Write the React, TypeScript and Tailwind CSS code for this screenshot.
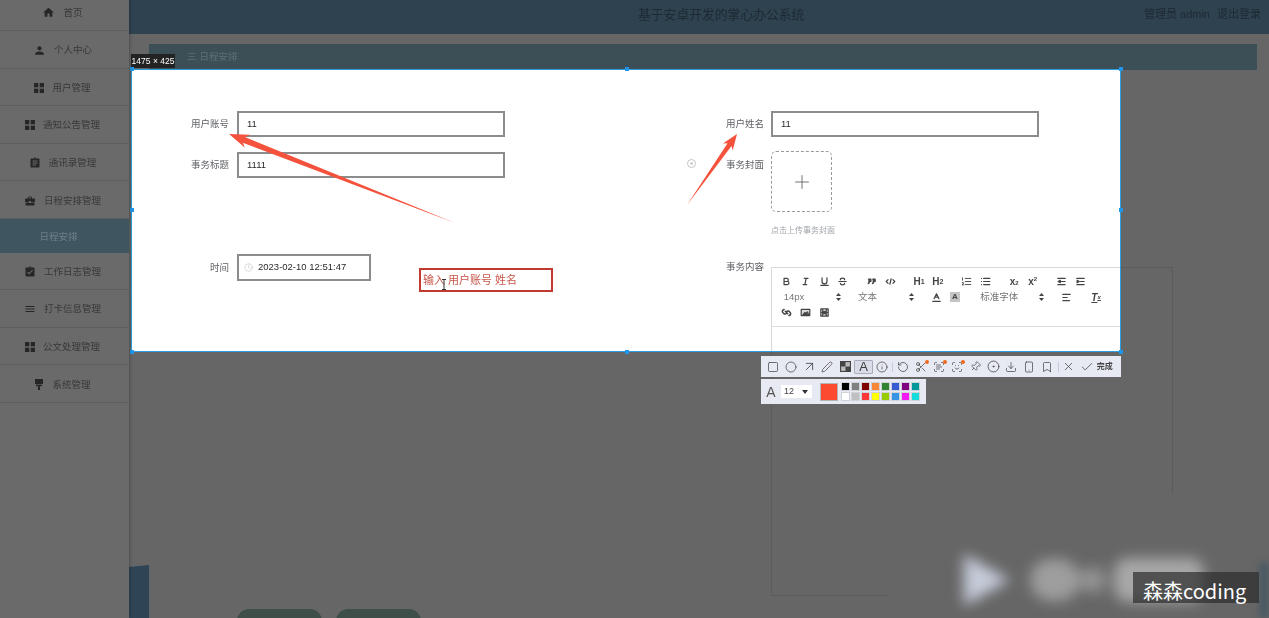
import type { ReactNode } from "react";
import {
  ArrowUpRight,
  Check,
  Circle,
  CircleDot,
  Clock,
  Download,
  Info,
  Bookmark,
  Pen,
  Pin,
  Plus,
  RotateCcw,
  ScanFace,
  Scissors,
  ScanText,
  Smartphone,
  Square,
  X,
} from "lucide-react";
import {
  MdAssignment,
  MdAssignmentTurnedIn,
  MdBusinessCenter,
  MdHome,
  MdMenu,
  MdPerson,
} from "react-icons/md";

function GridIcon() {
  return (
    <svg width="10" height="10" viewBox="0 0 10 10" fill="#262626">
      <rect x="0" y="0" width="4.3" height="4.3" />
      <rect x="5.7" y="0" width="4.3" height="4.3" />
      <rect x="0" y="5.7" width="4.3" height="4.3" />
      <rect x="5.7" y="5.7" width="4.3" height="4.3" />
    </svg>
  );
}

function BrushIcon() {
  return (
    <svg width="10" height="11" viewBox="0 0 10 11" fill="#262626">
      <rect x="1" y="0" width="8" height="5" />
      <rect x="2" y="5.6" width="6" height="1.6" />
      <rect x="4" y="7.2" width="2" height="3.8" />
    </svg>
  );
}

const menu: { label: string; icon: ReactNode }[] = [
  { label: "首页", icon: <MdHome size={13} color="#262626" /> },
  { label: "个人中心", icon: <MdPerson size={13} color="#262626" /> },
  { label: "用户管理", icon: <GridIcon /> },
  { label: "通知公告管理", icon: <GridIcon /> },
  { label: "通讯录管理", icon: <MdAssignment size={12} color="#262626" /> },
  { label: "日程安排管理", icon: <MdBusinessCenter size={12} color="#262626" /> },
];

const menuAfter: { label: string; icon: ReactNode }[] = [
  { label: "工作日志管理", icon: <MdAssignmentTurnedIn size={12} color="#262626" /> },
  { label: "打卡信息管理", icon: <MdMenu size={12} color="#262626" /> },
  { label: "公文处理管理", icon: <GridIcon /> },
  { label: "系统管理", icon: <BrushIcon /> },
];

function MenuItem({ label, icon }: { label: string; icon: ReactNode }) {
  return (
    <div className="flex h-[37.6px] items-center justify-center gap-[8px] border-b border-[#5e5e5e] pr-[4px] pt-[2px] text-[9.5px] text-[#383838]">
      {icon}
      <span>{label}</span>
    </div>
  );
}

function Field({
  label,
  className,
  labelClass,
  children,
}: {
  label: string;
  className?: string;
  labelClass?: string;
  children: ReactNode;
}) {
  return (
    <div className={`flex items-start ${className ?? ""}`}>
      <span className={`w-[60px] shrink-0 text-right text-[9.5px] leading-[12px] text-[#606266] ${labelClass ?? "pt-[7px]"}`}>
        {label}
      </span>
      {children}
    </div>
  );
}

function TextBox({ value, className }: { value: string; className: string }) {
  return (
    <div className={`flex items-center border-2 border-[#8c8c8c] pl-[8px] text-[9.5px] text-[#2a2a2a] ${className}`}>
      {value}
    </div>
  );
}

// quill style toolbar glyphs
function Glyph({ children }: { children: ReactNode }) {
  return (
    <span className="flex h-[16px] w-[18.6px] items-center justify-center">
      <svg width="11" height="11" viewBox="0 0 18 18" fill="none" stroke="#444" strokeWidth="2" strokeLinecap="round" strokeLinejoin="round">
        {children}
      </svg>
    </span>
  );
}

function Heading({ n }: { n: string }) {
  return (
    <span className="flex h-[16px] w-[18.6px] items-center justify-center text-[10px] font-bold text-[#444]">
      H<span className="mt-[3px] text-[7px]">{n}</span>
    </span>
  );
}

function Script({ n, up }: { n: string; up?: boolean }) {
  return (
    <span className="flex h-[16px] w-[18.6px] items-center justify-center text-[10px] font-bold text-[#444]">
      x<span className={`text-[6px] ${up ? "mb-[4px]" : "mt-[4px]"}`}>{n}</span>
    </span>
  );
}

function Picker({ label, className }: { label: string; className: string }) {
  return (
    <span className={`flex h-[16px] items-center justify-between text-[9.5px] text-[#777] ${className}`}>
      <span>{label}</span>
      <svg width="5" height="8" viewBox="0 0 5 8" fill="#444">
        <path d="M2.5 0 5 3H0zM2.5 8 0 5h5z" />
      </svg>
    </span>
  );
}

function EditorToolbar() {
  return (
    <div className="h-[59px] w-[402px] border-b border-[#dcdcdc] pl-[5.7px] pt-[5px]">
      <div className="flex">
        <div className="mr-[10.3px] flex">
          <Glyph>
            <path d="M5 4h4.5a2.5 2.5 0 0 1 0 5H5zM5 9h5.5a2.5 2.5 0 0 1 0 5H5z" />
          </Glyph>
          <Glyph>
            <path d="M7 4h6M5 14h6M8 14l2-10" />
          </Glyph>
          <Glyph>
            <path d="M5 3v6a4 4 0 0 0 8 0V3M3 15.5h12" />
          </Glyph>
          <Glyph>
            <path d="M3 9h12M12.5 6c0-1.5-1.5-2.5-3.5-2.5S5.500 4.500 5.500 6M5.500 12c0 1.500 1.500 2.500 3.500 2.500s3.500-1 3.500-2.500" />
          </Glyph>
        </div>
        <div className="mr-[10.3px] flex">
          <Glyph>
            <path d="M4 5h4v4H6c0 2-1 3-2.500 3.500M11 5h4v4h-2c0 2-1 3-2.500 3.500" fill="#444" />
          </Glyph>
          <Glyph>
            <path d="M5 6 2 9l3 3M13 6l3 3-3 3M10 4.500 8 13.500" />
          </Glyph>
        </div>
        <div className="mr-[10.3px] flex">
          <Heading n="1" />
          <Heading n="2" />
        </div>
        <div className="mr-[10.3px] flex">
          <Glyph>
            <path d="M7 4h9M7 9h9M7 14h9M2.500 3v4M2 11h2.500l-2.500 3.500h2.500" strokeWidth="1.500" />
          </Glyph>
          <Glyph>
            <path d="M6 4h10M6 9h10M6 14h10M2.500 4h.01M2.500 9h.01M2.500 14h.01" />
          </Glyph>
        </div>
        <div className="mr-[10.3px] flex">
          <Script n="2" />
          <Script n="2" up />
        </div>
        <div className="flex">
          <Glyph>
            <path d="M3 4h12M9 9h6M3 14h12M7 7 3.500 9 7 11z" fill="#444" />
          </Glyph>
          <Glyph>
            <path d="M3 4h12M9 9h6M3 14h12M3.500 7 7 9l-3.500 2z" fill="#444" />
          </Glyph>
        </div>
      </div>
      <div className="flex items-center">
        <Picker label="14px" className="mr-[4.3px] w-[69px] pl-[6px] pr-[6px]" />
        <Picker label="文本" className="mr-[6px] w-[70px] pl-[7px] pr-[7px]" />
        <Glyph>
          <path d="M5 11l4-8 4 8M6.500 8.500h5M3 15.500h12" />
        </Glyph>
        <span className="flex h-[16px] w-[18.6px] items-center justify-center">
          <span className="flex h-[10px] w-[10px] items-center justify-center bg-[#c4c4c4] text-[8px] font-bold text-[#444]">A</span>
        </span>
        <Picker label="标准字体" className="ml-[7px] mr-[8px] w-[78px] pl-[9px] pr-[5px]" />
        <Glyph>
          <path d="M3 4h12M3 9h7M3 14h11" />
        </Glyph>
        <span className="w-[11px]" />
        <span className="flex h-[16px] w-[18.6px] items-center justify-center text-[10px] font-bold italic text-[#444] underline">
          T<span className="text-[6px]">x</span>
        </span>
      </div>
      <div className="-mt-[1px] flex">
        <Glyph>
          <path d="M7 7l4 4M5 4a3 3 0 0 0-2 5l2 2a3 3 0 0 0 4-1M13 14a3 3 0 0 0 2-5l-2-2a3 3 0 0 0-4 1" strokeWidth="2.500" />
        </Glyph>
        <Glyph>
          <path d="M2 4h14v10H2zM5 12l3-3 2 2 2-3 2 4z" fill="#ddd" />
        </Glyph>
        <Glyph>
          <path d="M3 3h12v12H3zM3 9h12M6 3v4h6V3M6 15v-4h6v4" fill="#ddd" />
        </Glyph>
      </div>
    </div>
  );
}

function Tool({ children, active, badge }: { children: ReactNode; active?: boolean; badge?: boolean }) {
  return (
    <span
      className={`relative flex h-[14px] w-[18.1px] shrink-0 items-center justify-center text-[#3c3c3c] ${
        active ? "rounded-[1px] border border-[#a9adba] bg-[#dadde8]" : ""
      }`}
    >
      {children}
      {badge && <span className="absolute right-[1px] top-[0px] h-[4px] w-[4px] rounded-full bg-[#ef6a1e]" />}
    </span>
  );
}

const swatchRows = [
  ["#000000", "#808080", "#800000", "#f7883a", "#308430", "#385ad3", "#800080", "#009999"],
  ["#ffffff", "#c0c0c0", "#fb3838", "#ffff00", "#99cc00", "#3894e4", "#f31bf3", "#16dcdc"],
];

function CaptureToolbar() {
  const s = { size: 12, strokeWidth: 1.4 };
  return (
    <div className="absolute left-[761px] top-[356px]">
      <div className="flex h-[21px] w-[360px] items-center bg-[#e8eaf3] pl-[3px]">
        <Tool>
          <Square {...s} />
        </Tool>
        <Tool>
          <Circle {...s} />
        </Tool>
        <Tool>
          <ArrowUpRight size={15} strokeWidth={1.3} />
        </Tool>
        <Tool>
          <Pen {...s} />
        </Tool>
        <Tool>
          <svg width="11" height="11" viewBox="0 0 10 10">
            <rect x="0.500" y="0.500" width="9" height="9" fill="#bbb" stroke="#444" />
            <rect x="0.500" y="0.500" width="4.500" height="4.500" fill="#444" />
            <rect x="5" y="5" width="4.500" height="4.500" fill="#444" />
          </svg>
        </Tool>
        <Tool active>
          <span className="text-[13px] leading-none">A</span>
        </Tool>
        <Tool>
          <Info {...s} />
        </Tool>
        <span className="mx-[1px] h-[10px] w-px shrink-0 bg-[#c9ccd8]" />
        <Tool>
          <RotateCcw {...s} />
        </Tool>
        <Tool badge>
          <Scissors {...s} />
        </Tool>
        <Tool badge>
          <ScanText {...s} />
        </Tool>
        <Tool badge>
          <ScanFace {...s} />
        </Tool>
        <Tool>
          <Pin size={11} strokeWidth={1.4} className="rotate-45" />
        </Tool>
        <Tool>
          <CircleDot size={13} strokeWidth={1.4} />
        </Tool>
        <Tool>
          <Download {...s} />
        </Tool>
        <Tool>
          <Smartphone {...s} />
        </Tool>
        <Tool>
          <Bookmark {...s} />
        </Tool>
        <span className="mx-[1px] h-[10px] w-px shrink-0 bg-[#c9ccd8]" />
        <Tool>
          <X size={13} strokeWidth={1.3} />
        </Tool>
        <Tool>
          <Check size={14} strokeWidth={1.3} />
        </Tool>
        <span className="ml-[1px] whitespace-nowrap text-[8px] font-bold text-[#444]">完成</span>
      </div>
      <div className="mt-[2px] flex h-[25px] w-[165px] items-center bg-[#e8eaf3] pl-[4px]">
        <span className="w-[12px] text-center text-[14px] leading-none text-[#555]">A</span>
        <span className="ml-[4px] flex h-[13px] w-[31px] items-center justify-between bg-white px-[3px] text-[9px] text-[#444]">
          12
          <span className="mr-[1px] h-0 w-0 border-x-[3px] border-t-[4px] border-x-transparent border-t-[#333]" />
        </span>
        <span className="ml-[8px] h-[18px] w-[18px] border border-[#b4b4b4] bg-[#fb4a30]" />
        <div className="ml-[3px] flex flex-col gap-[1.500px]">
          {swatchRows.map((row) => (
            <div key={row[0]} className="flex gap-[1.500px]">
              {row.map((c) => (
                <span key={c} className="h-[8.500px] w-[8.500px] border border-[#d0d2da]" style={{ backgroundColor: c }} />
              ))}
            </div>
          ))}
        </div>
      </div>
    </div>
  );
}

function Handle({ className }: { className: string }) {
  return <span className={`absolute h-[4px] w-[4px] bg-[#2196e8] ${className}`} />;
}

export default function App() {
  return (
    <div className="relative h-[618px] w-[1269px] overflow-hidden bg-[#666666] font-['Liberation_Sans','Noto_Sans_CJK_SC',sans-serif]">
      {/* video softness, the caption label stays sharp */}
      <div className="relative flex h-full w-full blur-[0.4px]">
        {/* dimmed page behind the capture */}
        <aside className="z-10 mt-[-6.6px] w-[129px] shrink-0 bg-[#6a6a6a] shadow-[1px_0_3px_rgba(0,0,0,0.25)]">
          {menu.map((m) => (
            <MenuItem key={m.label} {...m} />
          ))}
          <div className="flex h-[33.600px] items-center justify-center bg-[#3f5560] pr-[12px] pt-[2px] text-[9.5px] text-[#6d8089]">日程安排</div>
          {menuAfter.map((m) => (
            <MenuItem key={m.label} {...m} />
          ))}
        </aside>

        <main className="relative flex min-w-0 flex-1 flex-col">
          <header className="flex h-[34px] shrink-0 items-center bg-[#2f4250] pb-[5px] pl-[509px] pr-[8px] text-[#1d2a33]">
            <span className="text-[12.8px]">基于安卓开发的掌心办公系统</span>
            <span className="ml-auto text-[11px]">管理员 admin</span>
            <span className="ml-[7px] text-[11px]">退出登录</span>
          </header>
          <div className="ml-[20px] mr-[12px] mt-[10px] flex h-[26px] shrink-0 items-center bg-[#3d4f56] pl-[38px] pt-[1px] text-[9.5px] text-[#5f6f76]">
            <span>三</span>
            <span className="ml-[3px]">日程安排</span>
          </div>
          <div className="ml-[642px] mt-[197px] h-[329px] w-[402px] shrink-0 border border-[#5b5b5b]" />
          <div className="ml-[108px] mt-[13px] flex gap-[14px]">
            <span className="h-[24px] w-[85px] rounded-[12px] bg-[#3e4f4a]" />
            <span className="h-[24px] w-[85px] rounded-[12px] bg-[#3e4f4a]" />
          </div>
          <div className="absolute bottom-0 left-0 h-[53px] w-[20px] bg-[#2f4556] [clip-path:polygon(0_2px,100%_0,100%_100%,0_100%)]" />
        </main>

        {/* blurred player watermark */}
        <div className="absolute left-[888px] top-[493px] h-[125px] w-[292px] bg-[#666666]" />
        <div className="absolute bottom-0 right-0 h-[55px] w-[10px] bg-[#4a5a63] blur-[3px]" />
        <div className="absolute left-[960px] top-[552px] flex items-center blur-[7px]">
          <svg width="50" height="56" viewBox="0 0 50 56">
            <path d="M4 2 50 28 4 54z" fill="#c6ccda" />
          </svg>
          <span className="ml-[20px] h-[42px] w-[50px] rounded-full bg-[#9e9e9e]" />
          <span className="h-[26px] w-[26px] rounded-full bg-[#939393]" />
          <span className="ml-[8px] h-[44px] w-[90px] rounded-[14px] bg-[#a8a8a8]" />
        </div>

        {/* capture selection */}
        <section className="absolute left-[131px] top-[69px] flex h-[283px] w-[990px] overflow-hidden border border-[#2d9fe0] bg-white pl-[37px] pt-[41px]">
          <div className="w-[535px] shrink-0">
            <Field label="用户账号">
              <TextBox value="11" className="ml-[8px] h-[26px] w-[268px]" />
            </Field>
            <Field label="事务标题" className="mt-[15px]">
              <TextBox value="1111" className="ml-[8px] h-[26px] w-[268px]" />
            </Field>
            <Field label="时间" className="mt-[76px]" labelClass="pt-[8px]">
              <div className="ml-[8px] flex h-[27px] w-[134px] items-center border-2 border-[#8c8c8c] pl-[5px] text-[9.5px] text-[#2a2a2a]">
                <Clock size={9} strokeWidth={1.25} color="#b5b5b5" />
                <span className="ml-[5px]">2023-02-10 12:51:47</span>
              </div>
            </Field>
          </div>
          <div className="shrink-0">
            <Field label="用户姓名">
              <TextBox value="11" className="ml-[7px] h-[26px] w-[268px]" />
            </Field>
            <Field label="事务封面" className="mt-[14px]" labelClass="pt-[8px]">
              <div className="ml-[7px]">
                <div className="flex h-[61px] w-[61px] items-center justify-center rounded-[5px] border border-dashed border-[#9a9a9a]">
                  <Plus size={22} strokeWidth={1} color="#666" />
                </div>
                <div className="mt-[13px] text-[8px] leading-[12px] text-[#a0a4ab]">点击上传事务封面</div>
              </div>
            </Field>
            <Field label="事务内容" className="mt-[30px]" labelClass="-mt-[6px]">
              <div className="ml-[7px] h-[200px] w-[402px] border border-b-0 border-[#d9d9d9]">
                <EditorToolbar />
              </div>
            </Field>
          </div>
        </section>
        <span className="absolute left-[131px] top-[54px] flex h-[14px] w-[44px] items-center justify-center bg-[#232323] text-[8.500px] text-white">
          1475 × 425
        </span>
        <Handle className="left-[130px] top-[67px]" />
        <Handle className="left-[625px] top-[67px]" />
        <Handle className="left-[1119px] top-[67px]" />
        <Handle className="left-[130px] top-[208px]" />
        <Handle className="left-[1119px] top-[208px]" />
        <Handle className="left-[130px] top-[350px]" />
        <Handle className="left-[625px] top-[350px]" />
        <Handle className="left-[1119px] top-[350px]" />

        {/* annotations drawn on the capture */}
        <svg className="pointer-events-none absolute inset-0" width="1269" height="618" viewBox="0 0 1269 618">
          <polygon points="229,134 250.200,134.800 245,137.100 455,223 242.800,142.700 245,147.800" fill="#f4523d" />
          <polygon points="737,134 732.700,150.500 731.500,146 687,205 727.500,143.200 722.900,143.600" fill="#f4523d" />
          <circle cx="691.500" cy="163.500" r="4" fill="none" stroke="#c4c4c4" />
          <circle cx="691.500" cy="163.500" r="1.300" fill="#c4c4c4" />
        </svg>
        <div className="absolute left-[419px] top-[268px] flex h-[24px] w-[134px] items-center border-2 border-[#c23a2e] pl-[2px] text-[11px] text-[#c8574a]">
          输入 用户账号 姓名
          <svg className="absolute left-[20px] top-[9px]" width="6" height="11" viewBox="0 0 6 11" fill="none" stroke="#333">
            <path d="M1 .5h4M1 10.500h4M3 .5v10" />
          </svg>
        </div>

        <CaptureToolbar />
      </div>

      <div className="absolute left-[1133px] top-[572px] flex h-[31px] w-[126px] items-center bg-[#2c2c2c]/70 pl-[10px] pt-[6px] font-['Noto_Sans_CJK_SC','Noto_Sans',sans-serif] text-[20px] leading-none text-white">
        森森coding
      </div>
    </div>
  );
}
